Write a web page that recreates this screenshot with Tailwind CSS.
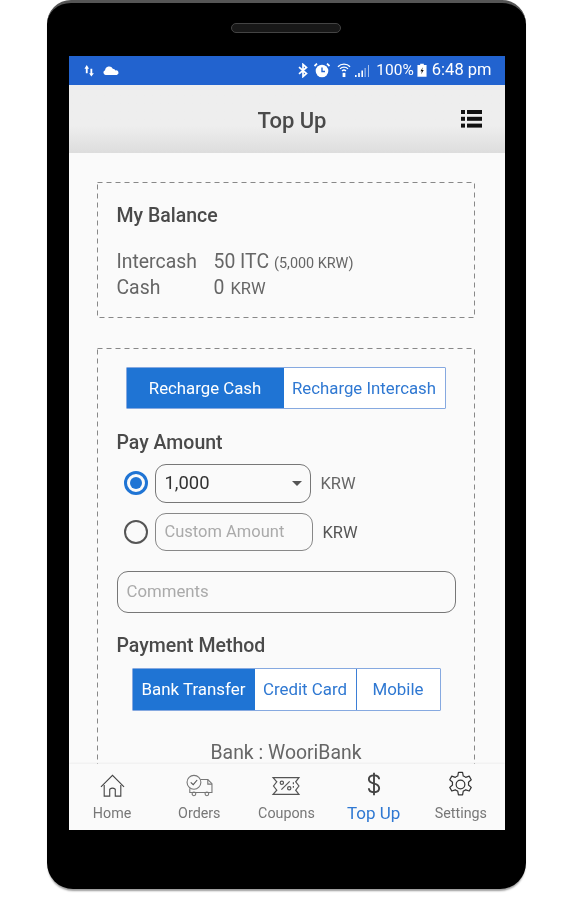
<!DOCTYPE html>
<html>
<head>
<meta charset="utf-8">
<script src="https://cdn.jsdelivr.net/npm/@tailwindcss/browser@4"></script>
</head>
<body class="bg-white font-['Roboto',sans-serif]">
<div class="w-[571px] h-[900px] overflow-hidden bg-white pl-[47px]">
  <!-- phone -->
  <div class="w-[479px] h-[889px] bg-black rounded-t-[24px] rounded-b-[26px] border-t-[3px] border-t-[#555] shadow-[0_3px_2px_-1px_rgba(0,0,0,0.4)] flex flex-col items-center">
    <div class="mt-[20px] w-[110px] h-[10px] rounded-full bg-[#181818] border border-[#444] -translate-x-[1px] blur-[0.4px]"></div>
    <!-- screen -->
    <div class="mt-[23px] w-[436px] h-[774px] flex flex-col bg-[#fafafa] overflow-hidden blur-[0.45px]">
      <!-- status bar -->
      <div class="h-[29px] shrink-0 bg-[#2263cf] flex items-center justify-between pl-[15px] pr-[13px] text-white">
        <div class="flex items-center gap-[7px]">
          <svg width="11" height="13" viewBox="0 0 12 14" fill="white"><path d="M3 1 L5.5 5 H4 V10 H2 V5 H.5Z"/><path d="M7 5 H9 V10 H10.8 L8 13.5 L5.6 10 H7Z"/></svg>
          <svg width="18" height="9" viewBox="0 0 18 10" fill="white"><path d="M3 10 a2.8 2.8 0 0 1-.6-5.4 A4.6 4.6 0 0 1 11 3 a3.4 3.4 0 0 1 3 2 A2.6 2.6 0 0 1 15.5 10Z"/></svg>
        </div>
        <div class="flex items-center">
          <svg width="10" height="15" viewBox="0 0 10 15" fill="none" stroke="white" stroke-width="1.7"><path d="M1 4.2 L8.5 10.5 L5 13.6 V1.4 L8.5 4.5 L1 10.8"/></svg>
          <svg class="ml-[6px]" width="16" height="15" viewBox="0 0 16 15"><circle cx="8" cy="8" r="6.3" fill="white"/><path d="M8 4.5 V8.5 H11" stroke="#2263cf" stroke-width="1.4" fill="none"/><path d="M.5 3 L3 .6 M15.5 3 L13 .6" stroke="white" stroke-width="1.8"/></svg>
          <svg class="ml-[7px]" width="14" height="15" viewBox="0 0 15 15" fill="none" stroke="white" stroke-width="1.4"><path d="M1 3.4 A9 9 0 0 1 14 3.4"/><path d="M3.2 5.8 A6 6 0 0 1 11.8 5.8"/><path d="M5.4 8 A3 3 0 0 1 9.6 8"/><path d="M7.5 10 V14.5" stroke-width="3"/></svg>
          <svg class="ml-[4px]" width="15" height="14" viewBox="0 0 15 14" fill="white"><rect x="0" y="11" width="1.6" height="2"/><rect x="3.2" y="9" width="1.6" height="4"/><rect x="6.4" y="6.5" width="1.6" height="6.5"/><rect x="9.6" y="4" width="1" height="9" opacity=".7"/><rect x="13" y="1" width="1" height="12" opacity=".6"/></svg>
          <span class="ml-[6px] text-[15.5px] leading-none">100%</span>
          <svg class="ml-[3px]" width="10" height="15" viewBox="0 0 11 15"><path d="M3.5 0 H7.5 V1.5 H10.5 V14.5 H.5 V1.5 H3.5Z" fill="white"/><path d="M6.4 4 L3.8 8.4 H5.4 L4.6 11.6 L7.4 7 H5.7Z" fill="#111"/></svg>
          <span class="ml-[5px] text-[16.5px] leading-none">6:48 pm</span>
        </div>
      </div>
      <!-- header -->
      <div class="h-[68px] shrink-0 bg-gradient-to-b from-[#eeeeee] from-60% to-[#dddddd] relative flex items-center justify-center pl-[11px] pt-[3px]">
        <span class="text-[22px] font-medium text-[#4a4a4a]">Top Up</span>
        <svg class="absolute right-[23px] top-[25px]" width="21" height="18" viewBox="0 0 21 18" fill="#111"><rect x="0" y="0" width="4" height="4"/><rect x="6" y="0" width="15" height="4"/><rect x="0" y="6.8" width="4" height="4"/><rect x="6" y="6.8" width="15" height="4"/><rect x="0" y="13.6" width="4" height="4"/><rect x="6" y="13.6" width="15" height="4"/></svg>
      </div>
      <!-- content -->
      <div class="flex-1 min-h-0 overflow-hidden pl-[28px] pt-[29px]">
        <div class="relative w-[378px] h-[136px] pl-[20px] pt-[21px]">
          <svg class="absolute left-0 top-0" width="378" height="136" fill="none" stroke="#888" stroke-dasharray="5 4"><rect x=".5" y=".5" width="377" height="135"/></svg>
          <div class="text-[19.5px] leading-[26px] font-medium text-[#4a4a4a]">My Balance</div>
          <div class="mt-[20px] flex items-baseline text-[19.4px] leading-[26px] text-[#666]">
            <span class="w-[97px]">Intercash</span>
            <span>50 ITC</span>
            <span class="ml-[5px] text-[14.4px] leading-none">(5,000 KRW)</span>
          </div>
          <div class="flex items-baseline text-[19.4px] leading-[26px] text-[#666]">
            <span class="w-[97px]">Cash</span>
            <span>0</span>
            <span class="ml-[6px] text-[16.5px] leading-none">KRW</span>
          </div>
        </div>
        <div class="relative mt-[30px] w-[378px] h-[500px] pl-[20px] pt-[19px]">
          <svg class="absolute left-0 top-0" width="378" height="500" fill="none" stroke="#888" stroke-dasharray="5 4"><rect x=".5" y=".5" width="377" height="499"/></svg>
          <!-- recharge tabs -->
          <div class="ml-[9px] flex w-[320px] h-[42px] border-[1.5px] border-[#86a9e0] bg-white rounded-[1px] text-[16.8px]">
            <div class="w-[157px] bg-[#1f74d4] text-white flex items-center justify-center pt-[1px]">Recharge Cash</div>
            <div class="flex-1 text-[#2f78d2] flex items-center justify-center pt-[1px]">Recharge Intercash</div>
          </div>
          <div class="mt-[21px] text-[19.5px] leading-[26px] font-medium text-[#4a4a4a]">Pay Amount</div>
          <!-- select row -->
          <div class="mt-[8px] flex items-center h-[38px]">
            <div class="ml-[7px] w-[24px] h-[24px] rounded-full border-[3px] border-[#1f74d4] flex items-center justify-center">
              <div class="w-[12px] h-[12px] rounded-full bg-[#1f74d4]"></div>
            </div>
            <div class="ml-[7px] w-[156px] h-[39px] rounded-[11px] border-[1.5px] border-[#777] flex items-center justify-between pl-[9px] pr-[8px] text-[18.4px] text-[#333]">
              <span>1,000</span>
              <div class="w-0 h-0 border-l-[5px] border-r-[5px] border-t-[5px] border-l-transparent border-r-transparent border-t-[#555]"></div>
            </div>
            <span class="ml-[10px] text-[16.5px] text-[#666] pt-[3px]">KRW</span>
          </div>
          <!-- custom row -->
          <div class="mt-[11px] flex items-center h-[38px]">
            <div class="ml-[7px] w-[24px] h-[24px] rounded-full border-2 border-[#555]"></div>
            <div class="ml-[7px] w-[158px] h-[38px] rounded-[11px] border-[1.5px] border-[#888] flex items-center pl-[9px] text-[16.5px] text-[#aaa]">Custom Amount</div>
            <span class="ml-[10px] text-[16.5px] text-[#555] pt-[3px]">KRW</span>
          </div>
          <!-- comments -->
          <div class="mt-[20px] w-[339px] h-[42px] rounded-[11px] border-[1.5px] border-[#777] flex items-center pl-[9px] text-[16.8px] text-[#aaa]">Comments</div>
          <div class="mt-[20px] text-[19.5px] leading-[26px] font-medium text-[#4a4a4a]">Payment Method</div>
          <!-- payment tabs -->
          <div class="mt-[9px] ml-[15px] flex w-[309px] h-[43px] border-[1.5px] border-[#86a9e0] bg-white rounded-[1px] text-[16.9px]">
            <div class="w-[122px] bg-[#1f74d4] text-white flex items-center justify-center">Bank Transfer</div>
            <div class="w-[102px] border-r-[1.5px] border-[#3d7fd6] text-[#2f78d2] flex items-center justify-center">Credit Card</div>
            <div class="flex-1 text-[#2f78d2] flex items-center justify-center">Mobile</div>
          </div>
          <div class="mt-[29px] w-[339px] text-center text-[19.4px] leading-[26px] text-[#666]">Bank : WooriBank</div>
        </div>
      </div>
      <!-- bottom nav -->
      <div class="h-[66px] shrink-0 bg-[#fafafa] grid grid-cols-5 text-[14.3px] text-[#777] shadow-[0_-1px_2px_rgba(0,0,0,0.05)] relative">
        <div class="flex flex-col items-center">
          <svg class="mt-[10px]" width="27" height="24" viewBox="0 0 28 26" fill="none" stroke="#444" stroke-width="1.2"><path d="M1.5 14 L14 1.5 L26.5 14"/><path d="M5 12 V24 H11 V16.5 Q14 14 17 16.5 V24 H23 V12"/></svg>
          <span class="mt-[7px] leading-[17px]">Home</span>
        </div>
        <div class="flex flex-col items-center">
          <svg class="mt-[10px]" width="29" height="24" viewBox="0 0 30 26" fill="none" stroke="#777" stroke-width="1.2"><circle cx="9" cy="9" r="7.5"/><path d="M5.5 9 L8.2 11.6 L12.5 6.5" stroke="#555"/><path d="M16 6 H24 L28.5 10.5 V20 H4.5 V15.5"/><path d="M24 6 V11 H28.5"/><circle cx="9" cy="21.5" r="2"/><circle cx="23" cy="21.5" r="2"/></svg>
          <span class="mt-[7px] leading-[17px]">Orders</span>
        </div>
        <div class="flex flex-col items-center">
          <svg class="mt-[10px]" width="30" height="24" viewBox="0 0 30 26" fill="none" stroke="#555" stroke-width="1.3"><path d="M1 4 H29 L25.5 8.5 L29 13 L25.5 17.5 L29 22 H1 L5 17.5 L1.5 13 L5 8.5Z"/><path d="M10 17 L19 8" /><circle cx="10.5" cy="9.5" r="1.8"/><circle cx="18.5" cy="15.5" r="1.8"/><path d="M23 9 V17" stroke-dasharray="2 2"/></svg>
          <span class="mt-[7px] leading-[17px]">Coupons</span>
        </div>
        <div class="flex flex-col items-center">
          <svg class="mt-[8px]" width="14" height="24" viewBox="0 0 16 28" fill="none" stroke="#444" stroke-width="2.2"><path d="M14 8.5 C14 5.5 11.5 4 8 4 C4.5 4 2 5.7 2 8.5 C2 11.5 4.5 12.7 8 13.5 C11.5 14.3 14 15.7 14 19 C14 22 11.5 23.6 8 23.6 C4.5 23.6 2 22 2 19"/><path d="M8 1 V27"/></svg>
          <span class="mt-[7px] leading-[20px] text-[17px] text-[#2f78d2]">Top Up</span>
        </div>
        <div class="flex flex-col items-center">
          <svg class="mt-[6px]" width="29" height="29" viewBox="0 0 24 24" fill="none" stroke="#333" stroke-width="1" stroke-linejoin="round"><path d="M10.3 2 h3.4 l.6 3 a7.5 7.5 0 0 1 2 1.1 l2.9-1 1.7 3-2.3 2 a7.5 7.5 0 0 1 0 2.3 l2.3 2-1.7 3-2.9-1 a7.5 7.5 0 0 1-2 1.1 l-.6 3 h-3.4 l-.6-3 a7.5 7.5 0 0 1-2-1.1 l-2.9 1-1.7-3 2.3-2 a7.5 7.5 0 0 1 0-2.3 l-2.3-2 1.7-3 2.9 1 a7.5 7.5 0 0 1 2-1.1Z"/><circle cx="12" cy="12" r="3.6"/></svg>
          <span class="mt-[6px] leading-[17px]">Settings</span>
        </div>
      </div>
    </div>
  </div>
</div>
</body>
</html>
